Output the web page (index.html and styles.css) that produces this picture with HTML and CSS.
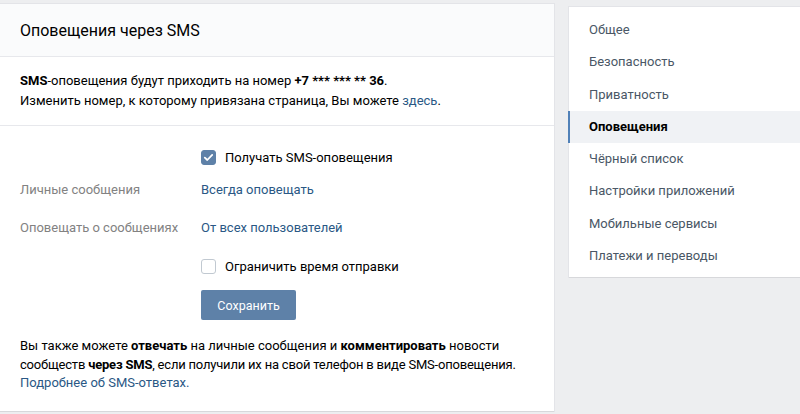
FILE: index.html
```html
<!DOCTYPE html>
<html lang="ru">
<head>
<meta charset="utf-8">
<link rel="stylesheet" href="styles.css">
</head>
<body>
<div class="page">
  <main class="card main">
    <div class="card-head">Оповещения через SMS</div>
    <div class="section info">
      <div><b>SMS</b>-оповещения будут приходить на номер <b>+7 *** *** ** 36</b>.</div>
      <div>Изменить номер, к которому привязана страница, Вы можете <a class="link">здесь</a>.</div>
    </div>
    <div class="section form">
      <div class="row r1">
        <div class="label"></div>
        <label class="check"><span class="box on"><svg viewBox="0 0 15 15" width="15" height="15"><path d="M3.8 7.6 L6.3 10 L11.2 4.9" fill="none" stroke="#fff" stroke-width="1.8" stroke-linecap="round" stroke-linejoin="round"/></svg></span>Получать SMS-оповещения</label>
      </div>
      <div class="row r2">
        <div class="label">Личные сообщения</div>
        <a class="link">Всегда оповещать</a>
      </div>
      <div class="row r3">
        <div class="label">Оповещать о сообщениях</div>
        <a class="link">От всех пользователей</a>
      </div>
      <div class="row r4">
        <div class="label"></div>
        <label class="check"><span class="box"></span>Ограничить время отправки</label>
      </div>
      <div class="row r5">
        <div class="label"></div>
        <button class="btn">Сохранить</button>
      </div>
      <div class="note">
        <div>Вы также можете <b>отвечать</b> на личные сообщения и <b>комментировать</b> новости</div>
        <div>сообществ <b>через SMS</b>, если получили их на свой телефон в виде SMS-оповещения.</div>
        <div><a class="link">Подробнее об SMS-ответах.</a></div>
      </div>
    </div>
  </main>
  <nav class="card menu">
    <a class="item">Общее</a>
    <a class="item">Безопасность</a>
    <a class="item">Приватность</a>
    <a class="item active">Оповещения</a>
    <a class="item">Чёрный список</a>
    <a class="item">Настройки приложений</a>
    <a class="item">Мобильные сервисы</a>
    <a class="item">Платежи и переводы</a>
  </nav>
</div>
</body>
</html>
```

FILE: styles.css
```css
html, body {
  margin: 0;
  padding: 0;
  background: #edeef0;
  overflow: hidden;
}
body {
  font-family: Roboto, "Open Sans", Arial, sans-serif;
  font-size: 13px;
  color: #000;
  width: 800px;
  height: 414px;
}
.page {
  display: flex;
  align-items: flex-start;
  gap: 15px;
}
.card {
  background: #fff;
  box-shadow: 0 1px 0 0 #d7d8db, 0 0 0 1px #e3e4e8;
}
.main {
  width: 554px;
  margin-top: 4px;
  flex: none;
}
.card-head {
  height: 51px;
  padding: 1px 20px 0;
  line-height: 52px;
  font-size: 16px;
  color: #000;
  background: #fafbfc;
  border-bottom: 1px solid #e7e8ec;
}
.section {
  padding: 0 20px;
}
.info {
  padding-top: 14px;
  padding-bottom: 14px;
  line-height: 20px;
  border-bottom: 1px solid #e7e8ec;
}
.link {
  color: #2a5885;
  text-decoration: none;
}
b { font-weight: 700; }
.form {
  padding-top: 21px;
  padding-bottom: 18px;
}
.row {
  display: flex;
  align-items: center;
  min-height: 20px;
}
.label {
  width: 181px;
  flex: none;
  color: #828282;
}
.r2 { margin-top: 12px; }
.r3 { margin-top: 18px; }
.r4 { margin-top: 19px; }
.r5 { margin-top: 14px; }
.check {
  display: flex;
  align-items: center;
  gap: 9px;
  color: #000;
}
.box {
  width: 13px;
  height: 13px;
  border: 1px solid #c1c9d1;
  border-radius: 3px;
  background: #fff;
  display: block;
  position: relative;
}
.box.on {
  background: #5e81a8;
  border-color: #5e81a8;
}
.box svg {
  position: absolute;
  left: -1px;
  top: -1px;
}
.btn {
  width: 95px;
  height: 30px;
  border: none;
  border-radius: 2px;
  background: #5e81a8;
  color: #fff;
  font-family: inherit;
  font-size: 12.5px;
  padding: 0;
}
.note {
  margin-top: 17px;
  line-height: 18.5px;
  color: #000;
}
.note div:nth-child(2) {
  letter-spacing: -0.2px;
}
.menu {
  width: 240px;
  margin-top: 7px;
  padding: 7px 0 5px;
  flex: none;
}
.item {
  display: block;
  padding: 8px 20px 8px 19px;
  line-height: 16.3px;
  color: #4a5766;
  border-left: 2px solid transparent;
  margin-left: -1px;
}
.item.active {
  background: #f0f2f5;
  border-left-color: #5181b8;
  color: #000;
  font-weight: 700;
}
```
